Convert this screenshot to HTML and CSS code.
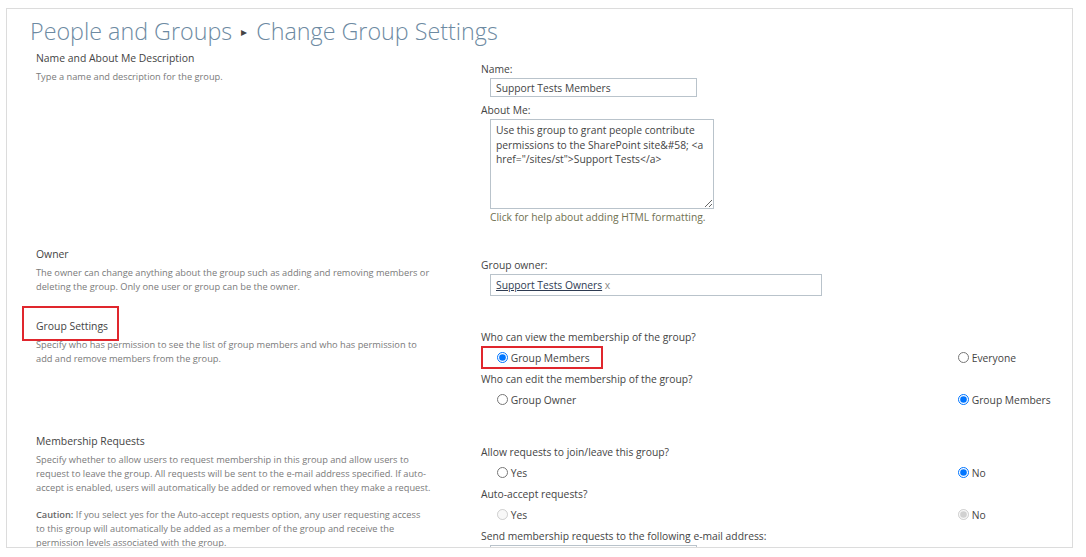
FILE: index.html
```html
<!DOCTYPE html>
<html lang="en">
<head>
    <meta charset="UTF-8">
    <title>Change Group Settings</title>
    <link rel="stylesheet" href="styles.css">
</head>
<body>
    <div class="frame">
        <h1 class="page-title">People and Groups <span class="crumb-arrow">&#9656;</span> Change Group Settings</h1>

        <div class="section">
            <div class="section-info">
                <h3>Name and About Me Description</h3>
                <p>Type a name and description for the group.</p>
            </div>
            <div class="section-body">
                <div class="field-label">Name:</div>
                <input type="text" class="text-input name-input" value="Support Tests Members">
                <div class="field-label">About Me:</div>
                <textarea class="about-input">Use this group to grant people contribute permissions to the SharePoint site&amp;#58; &lt;a href="/sites/st"&gt;Support Tests&lt;/a&gt;</textarea>
                <div class="help-text">Click for help about adding HTML formatting.</div>
            </div>
        </div>

        <div class="section">
            <div class="section-info">
                <h3>Owner</h3>
                <p>The owner can change anything about the group such as adding and removing members or deleting the group. Only one user or group can be the owner.</p>
            </div>
            <div class="section-body">
                <div class="field-label">Group owner:</div>
                <div class="text-input owner-input"><a href="#" class="person">Support Tests Owners</a> <span class="remove">x</span></div>
            </div>
        </div>

        <div class="section">
            <div class="section-info">
                <h3><span class="marked">Group Settings</span></h3>
                <p>Specify who has permission to see the list of group members and who has permission to add and remove members from the group.</p>
            </div>
            <div class="section-body">
                <div class="field-label">Who can view the membership of the group?</div>
                <div class="choice-row">
                    <label class="choice"><span class="marked"><input type="radio" name="view" checked> Group Members</span></label>
                    <label class="choice"><input type="radio" name="view"> Everyone</label>
                </div>
                <div class="field-label">Who can edit the membership of the group?</div>
                <div class="choice-row">
                    <label class="choice"><input type="radio" name="edit"> Group Owner</label>
                    <label class="choice"><input type="radio" name="edit" checked> Group Members</label>
                </div>
            </div>
        </div>

        <div class="section">
            <div class="section-info">
                <h3>Membership Requests</h3>
                <p>Specify whether to allow users to request membership in this group and allow users to request to leave the group. All requests will be sent to the e-mail address specified. If auto-accept is enabled, users will automatically be added or removed when they make a request.</p>
                <p class="caution"><b>Caution:</b> If you select yes for the Auto-accept requests option, any user requesting access to this group will automatically be added as a member of the group and receive the permission levels associated with the group.</p>
            </div>
            <div class="section-body">
                <div class="field-label">Allow requests to join/leave this group?</div>
                <div class="choice-row">
                    <label class="choice"><input type="radio" name="requests"> Yes</label>
                    <label class="choice"><input type="radio" name="requests" checked> No</label>
                </div>
                <div class="field-label">Auto-accept requests?</div>
                <div class="choice-row">
                    <label class="choice"><input type="radio" name="autoaccept" disabled> Yes</label>
                    <label class="choice"><input type="radio" name="autoaccept" checked disabled> No</label>
                </div>
                <div class="field-label">Send membership requests to the following e-mail address:</div>
                <input type="text" class="text-input name-input">
            </div>
        </div>
    </div>
</body>
</html>
```

FILE: styles.css
```css
body {
    margin: 0;
    background: #fff;
    font-family: "Open Sans", "Noto Sans", sans-serif;
    color: #444;
}
.frame {
    position: absolute;
    left: 6px;
    top: 8px;
    width: 1067px;
    height: 540px;
    border: 1px solid #dcdcdc;
    overflow: hidden;
    box-sizing: border-box;
}
.page-title {
    margin: 0;
    padding: 4px 0 0 23px;
    font-size: 23.3px;
    font-weight: 300;
    line-height: 36px;
    color: #6d8aa2;
    white-space: nowrap;
}
.crumb-arrow {
    font-size: 12px;
    color: #444;
    vertical-align: 4px;
    margin: 0 3px;
}
.section {
    display: grid;
    grid-template-columns: 445px 1fr;
    padding: 0 0 21px 29px;
}
.section-info h3 {
    margin: 0;
    font-size: 10.4px;
    font-weight: 400;
    line-height: 16px;
    color: #444;
}
.section-info p {
    width: 394.5px;
    margin: 4px 0 0;
    font-size: 9.25px;
    line-height: 14px;
    color: #7a7a7a;
}
.section-info p.caution {
    margin-top: 13px;
}
.section-info p b {
    color: #666;
    font-weight: 600;
}
.section-body {
    padding-top: 11px;
}
.field-label {
    font-size: 10.3px;
    line-height: 16px;
    color: #444;
}
.text-input {
    display: block;
    box-sizing: border-box;
    margin: 1px 0 5px 9px;
    padding: 0 5px;
    border: 1px solid #b9c3cb;
    font-family: inherit;
    font-size: 10.3px;
    color: #444;
    background: #fff;
}
.name-input {
    width: 207px;
    height: 19px;
}
.about-input {
    display: block;
    width: 224px;
    height: 90px;
    box-sizing: border-box;
    margin: 1px 0 0 9px;
    padding: 3px 5px;
    border: 1px solid #b9c3cb;
    font-family: inherit;
    font-size: 10.3px;
    line-height: 14.5px;
    color: #444;
    resize: vertical;
}
.help-text {
    margin-left: 9px;
    font-size: 10.3px;
    line-height: 16px;
    color: #707050;
}
.owner-input {
    width: 332px;
    height: 22px;
    line-height: 20px;
    margin-bottom: 1px;
}
.person {
    color: #2e3b52;
    text-decoration: underline;
}
.remove {
    color: #888;
}
.choice-row {
    display: grid;
    grid-template-columns: 477px 1fr;
    height: 25px;
    align-items: center;
    margin-bottom: 1px;
}
.choice-row:last-child {
    margin-bottom: 0;
}
.choice {
    font-size: 10.3px;
    color: #444;
    padding-left: 16px;
    white-space: nowrap;
}
.choice input {
    width: 11px;
    height: 11px;
    margin: 0;
    vertical-align: -1px;
}
.choice-row .choice + .choice {
    padding-left: 0;
}
/* red annotation frames */
.marked {
    position: relative;
}
.marked::after {
    content: "";
    position: absolute;
    left: -14px;
    right: -11px;
    top: -13px;
    bottom: -8px;
    border: 2px solid #e0262d;
}
.choice .marked::after {
    left: -16px;
    right: -13px;
    top: -5px;
    bottom: -4px;
}
```
